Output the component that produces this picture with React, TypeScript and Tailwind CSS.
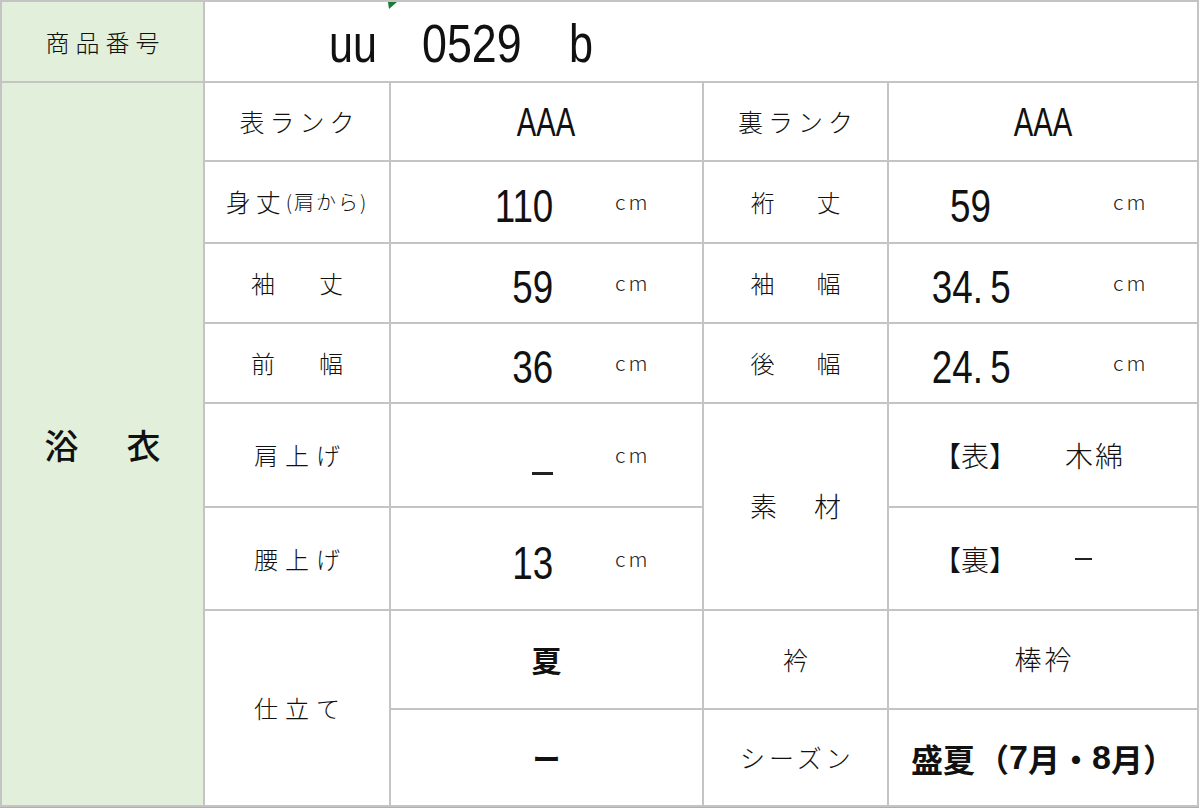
import React from "react";

const JP = "font-['Noto_Sans_CJK_JP',sans-serif]";
const NUM = "font-['Liberation_Sans',sans-serif]";

function Label({ children, cls = "" }: { children: React.ReactNode; cls?: string }) {
  return (
    <div className={`bg-white flex items-center justify-center ${JP} font-light text-[#111] ${cls}`}>
      {children}
    </div>
  );
}

function Cm({ ml }: { ml: string }) {
  return <div className={`${ml} ${JP} font-light text-[21px] tracking-[3px] text-[#222]`}>cm</div>;
}

function NumLeft({ v }: { v: string }) {
  return (
    <div className="bg-white flex items-center">
      <div className={`w-[162px] text-right ${NUM} text-[46px] leading-none text-[#111] mt-[8px]`}>
        {v === "_" ? (
          <span className="inline-block w-[21px] h-[3px] bg-[#222] mt-[24px]" />
        ) : (
          <span className="inline-block origin-right scale-x-[0.8]">{v}</span>
        )}
      </div>
      <Cm ml="ml-[62px]" />
    </div>
  );
}

function NumRight({ v, dec }: { v: string; dec?: string }) {
  return (
    <div className="bg-white flex items-center">
      <div className={`w-[164px] text-center ${NUM} text-[46px] leading-none text-[#111] mt-[8px]`}>
        <span className="inline-block origin-center scale-x-[0.8]">
          {v}
          {dec !== undefined && (
            <>
              .<span className="ml-[9px]">{dec}</span>
            </>
          )}
        </span>
      </div>
      <Cm ml="ml-[60px]" />
    </div>
  );
}

function AAA() {
  return (
    <div className={`bg-white flex items-center justify-center ${NUM} text-[40px] leading-none text-[#111]`}>
      <span className="inline-block origin-center scale-x-[0.73]">AAA</span>
    </div>
  );
}

export default function App() {
  return (
    <div className="w-[1200px] h-[809px] bg-white">
      <div className="w-[1199px] border-b border-[#b0b0b0]">
        <div className="grid grid-cols-[201px_184px_311px_183px_308px] grid-rows-[79px_77px_80px_78px_78px_102px_101px_97px_95px] gap-[2px] p-[2px] bg-[#c4c4c4]">
          {/* Row 1 */}
          <div className={`bg-[#e2efda] flex items-center justify-center ${JP} font-light text-[24px] tracking-[6px] pl-[6px] text-[#111]`}>
            商品番号
          </div>
          <div className="col-span-4 bg-white relative flex items-center">
            <svg className="absolute left-[183px] top-0" width="9" height="7" viewBox="0 0 9 7">
              <polygon points="0,0 9,0 1,7" fill="#1e7b34" />
            </svg>
            <div className={`flex items-center ${NUM} text-[54px] leading-none text-[#111] mt-[2px] pl-[124px]`}>
              <div className="w-[93px]">
                <span className="inline-block origin-left scale-x-[0.8]">uu</span>
              </div>
              <div className="w-[147px]">
                <span className="inline-block origin-left scale-x-[0.83]">0529</span>
              </div>
              <div>
                <span className="inline-block origin-left scale-x-[0.8]">b</span>
              </div>
            </div>
          </div>

          {/* Left green merged */}
          <div className={`row-span-8 bg-[#e2efda] flex items-center justify-center ${JP} font-medium text-[34px] tracking-[7px] pl-[7px] text-[#111]`}>
            浴　衣
          </div>

          {/* Row 2 */}
          <Label cls="text-[25px] tracking-[5px] pl-[5px]">表ランク</Label>
          <AAA />
          <Label cls="text-[25px] tracking-[5px] pl-[5px]">裏ランク</Label>
          <AAA />

          {/* Row 3 */}
          <Label>
            <span className="text-[25px] tracking-[5px]">身丈</span>
            <span className="text-[20px] tracking-[2px]">(肩から)</span>
          </Label>
          <NumLeft v="110" />
          <Label cls="text-[24px] tracking-[9px] pl-[9px]">裄　丈</Label>
          <NumRight v="59" />

          {/* Row 4 */}
          <Label cls="text-[24px] tracking-[10px] pl-[10px]">袖　丈</Label>
          <NumLeft v="59" />
          <Label cls="text-[24px] tracking-[9px] pl-[9px]">袖　幅</Label>
          <NumRight v="34" dec="5" />

          {/* Row 5 */}
          <Label cls="text-[24px] tracking-[10px] pl-[10px]">前　幅</Label>
          <NumLeft v="36" />
          <Label cls="text-[24px] tracking-[9px] pl-[9px]">後　幅</Label>
          <NumRight v="24" dec="5" />

          {/* Row 6 */}
          <Label cls="text-[24px] tracking-[7px] pl-[7px]">肩上げ</Label>
          <NumLeft v="_" />
          <Label cls="row-span-2 text-[27px] tracking-[5px] pl-[5px]">素　材</Label>
          <div className={`bg-white flex items-center ${JP} font-light text-[28px] text-[#111]`}>
            <span className="ml-[44px]">【表】</span>
            <span className="ml-[48px] tracking-[2px]">木綿</span>
          </div>

          {/* Row 7 */}
          <Label cls="text-[24px] tracking-[7px] pl-[7px]">腰上げ</Label>
          <NumLeft v="13" />
          <div className={`bg-white flex items-center ${JP} font-light text-[28px] text-[#111]`}>
            <span className="ml-[44px]">【裏】</span>
            <span className="ml-[58px] inline-block w-[17px] h-[2px] bg-[#222]" />
          </div>

          {/* Row 8 */}
          <Label cls="row-span-2 text-[24px] tracking-[7px] pl-[7px]">仕立て</Label>
          <div className={`bg-white flex items-center justify-center ${JP} font-bold text-[30px] text-[#111]`}>夏</div>
          <Label cls="text-[25px]">衿</Label>
          <Label cls="text-[27px] tracking-[3px] pl-[3px]">棒衿</Label>

          {/* Row 9 */}
          <div className={`bg-white flex items-center justify-center ${JP} font-bold text-[28px] text-[#111]`}>ー</div>
          <Label cls="text-[25px] tracking-[4px] pl-[4px]">シーズン</Label>
          <div className={`bg-white flex items-center justify-center ${JP} font-bold text-[32px] text-[#111]`}>
            <span>盛夏</span>
            <span className="ml-[2px]">（</span>
            <span className={`${NUM} text-[34px]`}>7</span>
            <span>月・</span>
            <span className={`${NUM} text-[34px]`}>8</span>
            <span>月）</span>
          </div>
        </div>
      </div>
    </div>
  );
}
